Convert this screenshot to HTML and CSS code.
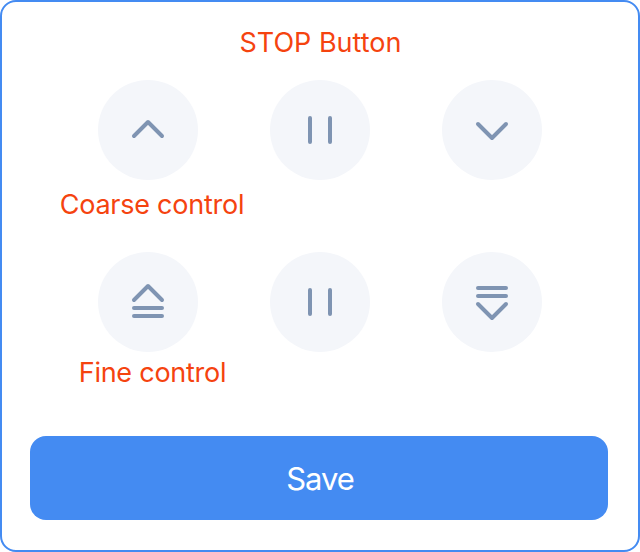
FILE: index.html
```html
<!DOCTYPE html>
<html lang="en">
<head>
<meta charset="utf-8">
<title>Bed control</title>
<link rel="stylesheet" href="styles.css">
</head>
<body>
<main class="card">
  <div class="label title"><span>STOP Button</span></div>
  <div class="controls">
    <button class="round" aria-label="Up"><svg class="icon" viewBox="0 0 100 100"><path d="M36 56 50 42 64 56"/></svg></button>
    <button class="round" aria-label="Stop"><svg class="icon" viewBox="0 0 100 100"><path d="M40 38V62M60 38V62"/></svg></button>
    <button class="round" aria-label="Down"><svg class="icon" viewBox="0 0 100 100"><path d="M36 44 50 58 64 44"/></svg></button>
  </div>
  <div class="label coarse"><span>Coarse control</span></div>
  <div class="controls">
    <button class="round" aria-label="Fine up"><svg class="icon" viewBox="0 0 100 100"><path d="M36 48 50 34 64 48M36 56H64M36 64H64"/></svg></button>
    <button class="round" aria-label="Stop"><svg class="icon" viewBox="0 0 100 100"><path d="M40 38V62M60 38V62"/></svg></button>
    <button class="round" aria-label="Fine down"><svg class="icon" viewBox="0 0 100 100"><path d="M36 36H64M36 44H64M36 52 50 66 64 52"/></svg></button>
  </div>
  <div class="label fine"><span>Fine control</span></div>
  <button class="save"><span>Save</span></button>
</main>
</body>
</html>
```
FILE: styles.css
```css
* { box-sizing: border-box; }
body { margin: 0; background: #fff; font-family: Inter, "Liberation Sans", sans-serif; }
.card {
  width: 640px;
  height: 552px;
  padding: 24px 30px 30px 28px;
  border: 2px solid #448bf2;
  border-radius: 16px;
  background: #fff;
  display: flex;
  flex-direction: column;
}
.label {
  height: 34px;
  line-height: 34px;
  font-size: 27px;
  color: #f5430f;
  white-space: nowrap;
  text-align: center;
}
.title { margin-bottom: 20px; margin-left: 3px; letter-spacing: 0; }
.controls { display: flex; gap: 72px; padding-left: 68px; }
.round {
  width: 100px;
  height: 100px;
  padding: 0;
  border: 0;
  border-radius: 50%;
  background: #f4f6fa;
}
.icon {
  display: block;
  width: 100px;
  height: 100px;
  fill: none;
  stroke: #7f94b2;
  stroke-width: 4;
  stroke-linecap: round;
  stroke-linejoin: round;
}
.coarse { width: 244px; margin: 8px 0 30px; letter-spacing: -0.25px; }
.fine { width: 245px; margin: 4px 0 46px; letter-spacing: -0.25px; }
.save {
  height: 84px;
  padding: 2px 0 0 2px;
  border: 0;
  border-radius: 16px;
  background: #448bf2;
  color: #fff;
  font: 400 31px/40px Inter, "Liberation Sans", sans-serif;
  letter-spacing: -1.1px;
}
```
